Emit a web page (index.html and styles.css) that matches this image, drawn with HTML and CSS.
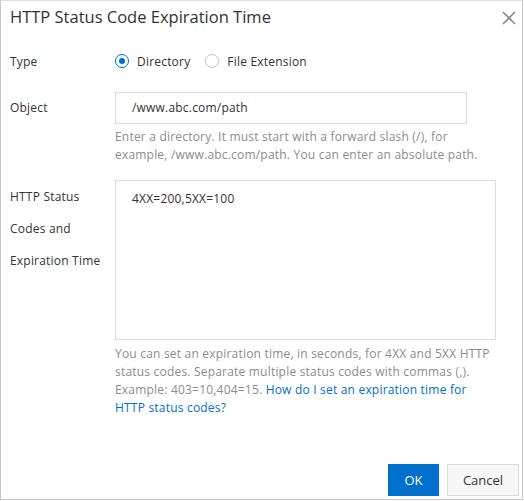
FILE: index.html
```html
<!DOCTYPE html>
<html>
<head>
<meta charset="utf-8">
<link rel="stylesheet" href="styles.css">
</head>
<body>
<div class="dialog">
  <div class="header">
    <div class="title">HTTP Status Code Expiration Time</div>
    <svg class="close" width="14" height="14" viewBox="0 0 14 14"><path d="M1 1L13 13M13 1L1 13" stroke="#8a8a8a" stroke-width="1.6" fill="none"/></svg>
  </div>
  <div class="body">
    <div class="row row-type">
      <div class="label">Type</div>
      <div class="control radios">
        <label class="radio"><span class="dot checked"></span>Directory</label>
        <label class="radio"><span class="dot"></span>File Extension</label>
      </div>
    </div>
    <div class="row row-object">
      <div class="label label-mid">Object</div>
      <div class="control">
        <div class="input">/www.abc.com/path</div>
        <div class="help">Enter a directory. It must start with a forward slash (/), for example, /www.abc.com/path. You can enter an absolute path.</div>
      </div>
    </div>
    <div class="row row-codes">
      <div class="label label-tall">HTTP Status Codes and Expiration Time</div>
      <div class="control">
        <div class="textarea">4XX=200,5XX=100</div>
        <div class="help help2">You can set an expiration time, in seconds, for 4XX and 5XX HTTP status codes. Separate multiple status codes with commas (,). Example: 403=10,404=15. <a class="link">How do I set an expiration time for HTTP status codes?</a></div>
      </div>
    </div>
  </div>
  <div class="footer">
    <button class="btn btn-ok">OK</button>
    <button class="btn btn-cancel">Cancel</button>
  </div>
</div>
</body>
</html>
```
FILE: styles.css
```css
html, body {
  margin: 0;
  padding: 0;
  background: #fff;
}
body {
  font-family: "Open Sans", "Noto Sans", sans-serif;
  color: #333;
  font-size: 12px;
  letter-spacing: 0.2px;
}
.dialog {
  box-sizing: border-box;
  width: 523px;
  height: 500px;
  border: 1px solid #c6c6c6;
  border-top-color: #dedede;
  display: flex;
  flex-direction: column;
}
.header {
  display: flex;
  justify-content: space-between;
  align-items: flex-start;
  padding: 3px 6px 0 9px;
}
.title {
  font-size: 16.5px;
  line-height: 26px;
  letter-spacing: 0;
  color: #333;
}
.close {
  margin-top: 7px;
}
.body {
  padding: 0 0 0 9px;
  flex: 1;
}
.row {
  display: flex;
}
.label {
  width: 105px;
  flex: none;
  color: #333;
}
.control {
  width: 381px;
}
.row-type {
  margin-top: 20px;
  height: 22px;
  align-items: center;
}
.radios {
  display: flex;
  align-items: center;
}
.radio {
  display: flex;
  align-items: center;
  margin-right: 15px;
}
.dot {
  box-sizing: border-box;
  width: 14px;
  height: 14px;
  border-radius: 50%;
  border: 1px solid #c4c4c4;
  margin-right: 8px;
  position: relative;
  background: #fff;
}
.dot.checked {
  border-color: #0070cc;
}
.dot.checked::after {
  content: "";
  position: absolute;
  left: 3px;
  top: 3px;
  width: 6px;
  height: 6px;
  border-radius: 50%;
  background: #0070cc;
}
.row-object {
  margin-top: 20px;
}
.label-mid {
  line-height: 32px;
}
.input {
  box-sizing: border-box;
  width: 352px;
  height: 32px;
  border: 1px solid #dcdcdc;
  padding-left: 16px;
  line-height: 30px;
  color: #333;
}
.help {
  color: #8c8c8c;
  line-height: 18px;
  margin-top: 4px;
}
.row-codes {
  margin-top: 16px;
}
.label-tall {
  line-height: 32px;
  padding-top: 1px;
  width: 96px;
  margin-right: 9px;
}
.textarea {
  box-sizing: border-box;
  width: 381px;
  height: 160px;
  border: 1px solid #dcdcdc;
  padding: 8px 16px;
  line-height: 20px;
}
.help2 {
  margin-top: 5px;
}
.link {
  color: #0070cc;
}
.footer {
  display: flex;
  justify-content: flex-end;
  gap: 8px;
  padding: 0 3px 3px 0;
}
.btn {
  font-family: inherit;
  font-size: 13px;
  height: 32px;
  border: 1px solid #0070cc;
  padding: 0;
  margin: 0;
}
.btn-ok {
  width: 51px;
  background: #0070cc;
  color: #fff;
}
.btn-cancel {
  width: 72px;
  background: #f7f7f7;
  border-color: #dcdcdc;
  color: #333;
}
```
